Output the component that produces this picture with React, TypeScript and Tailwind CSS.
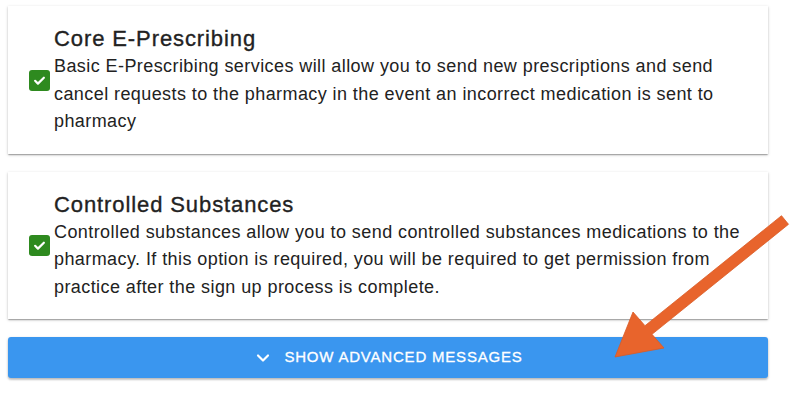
import { ChevronDown } from "lucide-react";

const services = [
  {
    title: "Core E-Prescribing",
    text: "Basic E-Prescribing services will allow you to send new prescriptions and send cancel requests to the pharmacy in the event an incorrect medication is sent to pharmacy",
  },
  {
    title: "Controlled Substances",
    text: "Controlled substances allow you to send controlled substances medications to the pharmacy. If this option is required, you will be required to get permission from practice after the sign up process is complete.",
  },
];

function CheckBox() {
  return (
    <div className="w-[21px] h-[21px] shrink-0 rounded-[3px] bg-[#2e8a1f] flex items-center justify-center">
      <svg width="15" height="15" viewBox="0 0 24 24" fill="none" stroke="white" strokeWidth="3.5" strokeLinecap="round" strokeLinejoin="round">
        <path d="M5 12.5l4.5 4.5L19 7.5" />
      </svg>
    </div>
  );
}

export default function App() {
  return (
    <div className="relative w-[792px] h-[400px] bg-white overflow-hidden font-['Liberation_Sans',Arial,sans-serif] text-[#222]">
      <div className="flex flex-col gap-[18px] pl-2 pr-6 pt-[6px]">
        {services.map((s) => (
          <div
            key={s.title}
            className="bg-white flex items-center gap-1 pl-[21px] pr-[12px] pt-[19px] pb-[18px] shadow-[0_1px_3px_rgba(0,0,0,0.2),0_1px_1px_rgba(0,0,0,0.14),0_2px_1px_-1px_rgba(0,0,0,0.12)]"
          >
            <CheckBox />
            <div>
              <h2 className="text-[22px] leading-[28px] tracking-[0.9px] [-webkit-text-stroke:0.35px_#222]">{s.title}</h2>
              <p className="text-[18px] leading-[27.5px] tracking-[0.42px]">{s.text}</p>
            </div>
          </div>
        ))}
        <button className="h-[41px] rounded-[3px] bg-[#3a96ef] text-white flex items-center justify-center gap-[11px] text-[15px] tracking-[0.8px] [-webkit-text-stroke:0.3px_white] shadow-[0_1px_3px_rgba(0,0,0,0.2),0_2px_2px_rgba(0,0,0,0.14)]">
          <ChevronDown size={20} strokeWidth={2.6} />
          SHOW ADVANCED MESSAGES
        </button>
      </div>
      <svg className="absolute inset-0 pointer-events-none" width="792" height="400" viewBox="0 0 792 400">
        <polygon
          points="781.5,215.7 788.5,224.3 652,334.3 664,348 615,357 633,312 645,325.7"
          fill="#e8642c"
          stroke="#d95a24"
          strokeWidth="0.8"
          strokeLinejoin="round"
        />
      </svg>
    </div>
  );
}
